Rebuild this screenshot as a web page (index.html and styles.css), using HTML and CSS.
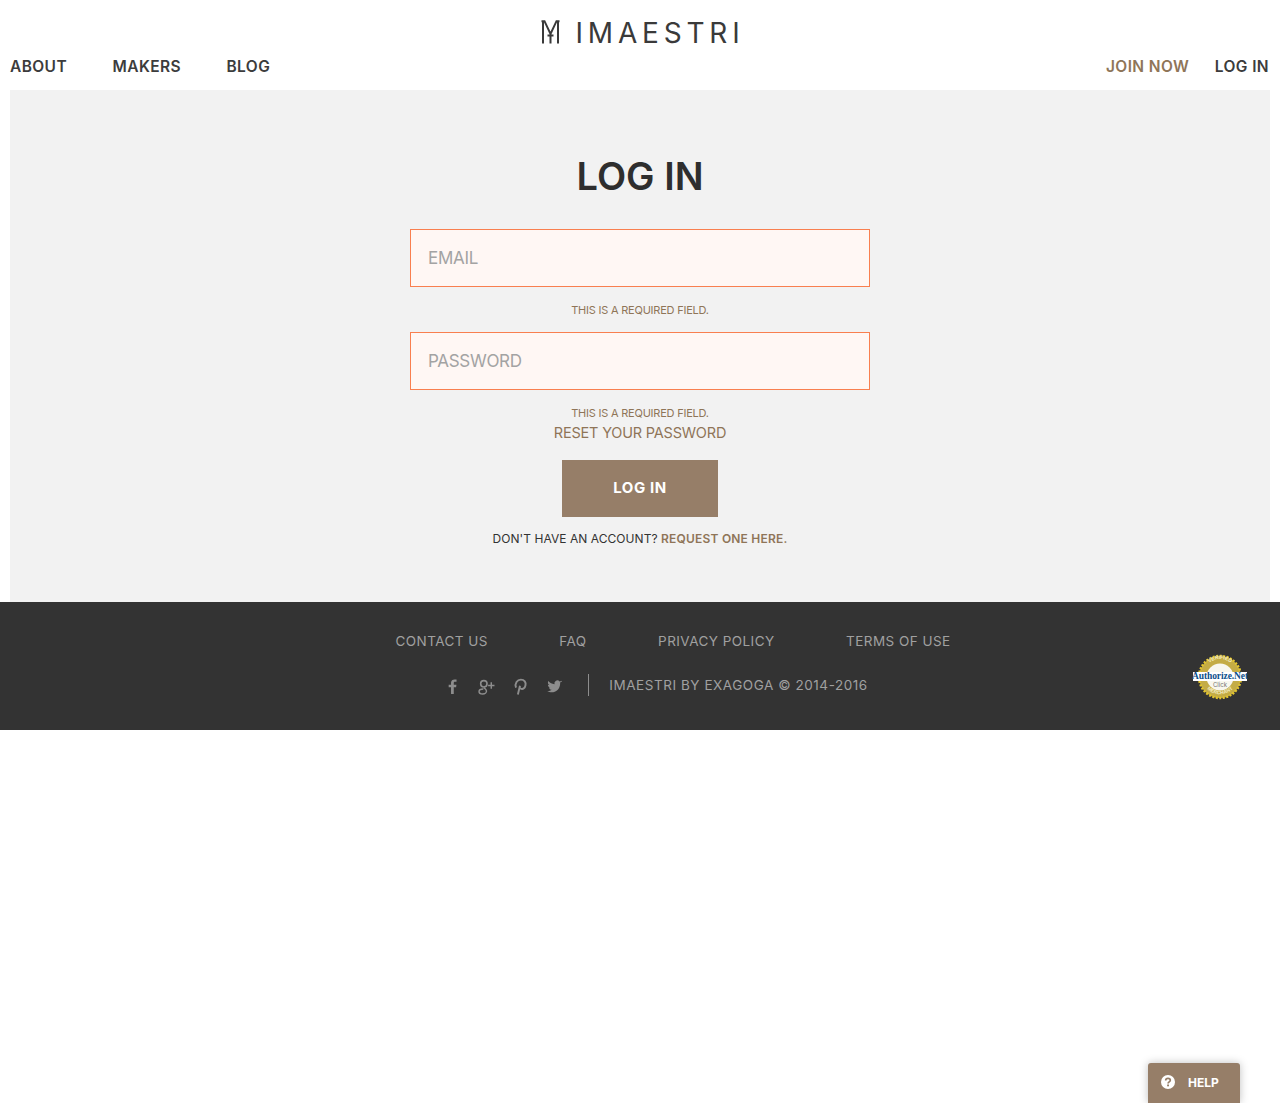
FILE: index.html
```
<!DOCTYPE html>
<html lang="en">
<head>
<meta charset="utf-8">
<title>iMaestri - Log in</title>
<link rel="stylesheet" href="styles.css">
</head>
<body>
<header class="site-header">
  <div class="logo">
    <svg class="logo-mark" viewBox="0 0 19 24" width="19" height="24"><path d="M2 23.500V1M17 23.500V1M.5 1.200h3L9.500 14l6-12.800h3M9.500 14v9.500M6.500 15.500h6" fill="none" stroke="#3a3a3a" stroke-width="2"/></svg>
    <span class="logo-text">IMAESTRI</span>
  </div>
  <nav class="nav">
    <div class="nav-left"><a>ABOUT</a><a>MAKERS</a><a>BLOG</a></div>
    <div class="nav-right"><a class="accent">JOIN NOW</a><a>LOG IN</a></div>
  </nav>
</header>
<main class="panel">
  <h1 class="title">LOG IN</h1>
  <div class="field">EMAIL</div>
  <p class="error">THIS IS A REQUIRED FIELD.</p>
  <div class="field">PASSWORD</div>
  <p class="error">THIS IS A REQUIRED FIELD.</p>
  <a class="reset">RESET YOUR PASSWORD</a>
  <button class="submit">LOG IN</button>
  <p class="signup">DON'T HAVE AN ACCOUNT? <a>REQUEST ONE HERE.</a></p>
</main>
<footer class="footer">
  <div class="footer-links"><a>CONTACT US</a><a>FAQ</a><a>PRIVACY POLICY</a><a>TERMS OF USE</a></div>
  <div class="footer-bottom">
    <div class="social">
      <svg viewBox="0 0 16 16" width="17" height="17"><path d="M9.200 15V8.700h2.200l.3-2.400H9.200V4.800c0-.7.200-1.200 1.200-1.200h1.400V1.500C11.400 1.500 10.700 1.400 9.900 1.400 8.100 1.400 6.600 2.500 6.600 4.500v1.800h-2.200v2.400h2.200V15z" fill="#8d8d8d"/></svg>
      <svg viewBox="0 0 16 16" width="17" height="17"><circle cx="5.500" cy="5.500" r="3" fill="none" stroke="#8d8d8d" stroke-width="1.500"/><path d="M5.500 9c2 1.500 2.500 2 2.500 3.200S6.700 15 4.500 15 1 14 1 12.600 3 10.300 5 10.300M12.500 4v6M9.500 7h6" fill="none" stroke="#8d8d8d" stroke-width="1.400"/></svg>
      <svg viewBox="0 0 16 16" width="17" height="17"><path d="M5.500 15.500c.6-2.400 1.400-5.500 2-8.200M3.800 9C2.300 5.200 5 1.500 8.300 1.500c3.500 0 5 2.600 4.400 5.300-.5 2.600-2.300 3.900-4 3.400-1-.3-1.400-1-1.400-1.500" fill="none" stroke="#8d8d8d" stroke-width="1.800"/></svg>
      <svg viewBox="0 0 16 16" width="17" height="17"><path d="M15 3.600c-.5.200-1 .4-1.600.5.600-.4 1-.9 1.200-1.600-.5.300-1.100.6-1.800.7a2.800 2.800 0 0 0-4.800 2.600C5.700 5.700 3.600 4.600 2.200 2.900c-.8 1.300-.4 3 .9 3.800-.5 0-.9-.1-1.300-.4 0 1.400 1 2.600 2.300 2.800-.4.100-.9.100-1.300 0 .4 1.100 1.400 1.900 2.600 2-1.200.9-2.700 1.400-4.200 1.200 4.300 2.700 12.200 1 12.200-8.100.6-.4 1.200-1 1.600-1.600z" fill="#8d8d8d"/></svg>
    </div>
    <span class="copyright">IMAESTRI BY EXAGOGA © 2014-2016</span>
  </div>
  <div class="seal" aria-label="Authorize.Net">
    <svg viewBox="0 0 56 46" width="56" height="46">
      <circle cx="28" cy="23" r="21" fill="#c4ac45" stroke="#e3c52e" stroke-width="2.500" stroke-dasharray="2 1.500"/>
      <circle cx="28" cy="23" r="13.500" fill="#f8f7ee"/>
      <rect x="1" y="18" width="54" height="9" fill="#fff"/>
      <path id="seal-top" d="M11 22a17 17 0 0 1 34 0" fill="none"/>
      <path id="seal-bottom" d="M10 26a18.500 18.500 0 0 0 36 0" fill="none"/>
      <text class="seal-ring"><textPath href="#seal-top" startOffset="50%" text-anchor="middle">VERIFIED</textPath></text>
      <text class="seal-ring"><textPath href="#seal-bottom" startOffset="50%" text-anchor="middle">MERCHANT</textPath></text>
    </svg>
    <span class="seal-text">Authorize.Net</span>
    <span class="seal-click">Click</span>
  </div>
</footer>
<button class="help"><svg viewBox="0 0 14 14" width="14" height="14"><circle cx="7" cy="7" r="7" fill="#fff"/><path d="M4.700 5.400c0-1.400 1.100-2.100 2.300-2.100s2.300.7 2.300 2c0 1.600-2.200 1.500-2.200 3.100" fill="none" stroke="#967e68" stroke-width="1.700"/><rect x="6.100" y="9.500" width="1.900" height="1.800" fill="#967e68"/></svg><span>HELP</span></button>
</body>
</html>
```
FILE: styles.css
```
* { box-sizing: border-box; }
html, body { margin: 0; padding: 0; }
body { background: #fff; font-family: Inter, "Liberation Sans", sans-serif; color: #333; height: 1103px; overflow: hidden; position: relative; }
a { color: inherit; text-decoration: none; }
.site-header { height: 90px; padding: 0 10px; display: flex; flex-direction: column; }
.logo { display: flex; justify-content: center; align-items: center; gap: 16px; padding-top: 20px; height: 56px; }
.logo-mark { margin-top: -12px; }
.logo-text { font-weight: 400; font-size: 28px; letter-spacing: 4.800px; color: #3a3a3a; line-height: 28px; margin-top: -10px; margin-right: -5px; }
.nav { display: flex; justify-content: space-between; font-size: 15.500px; font-weight: 600; line-height: 22px; letter-spacing: .4px; color: #3c3c3c; }
.nav-left { display: flex; gap: 45.500px; }
.nav-right { display: flex; gap: 25.500px; margin-right: 1px; }
.accent { color: #8f7558; }
.panel { margin: 0 10px; height: 512px; background: #f2f2f2; display: flex; flex-direction: column; align-items: center; padding-top: 65px; }
.title { margin: 0 0 32px; font-size: 38px; line-height: 42px; font-weight: 600; color: #2e2e2e; }
.field { width: 460px; height: 58px; border: 1px solid #f97f4f; background: #fff7f4; padding-left: 17px; line-height: 57px; font-size: 17px; color: #a3a3a3; letter-spacing: -.3px; }
.error { margin: 16px 0 15px; font-size: 11px; line-height: 14px; color: #8f7558; letter-spacing: -.22px; }
.reset { margin-top: -12px; font-size: 14.500px; line-height: 20px; color: #8f7558; letter-spacing: -.2px; }
.submit { margin-top: 17px; width: 156px; height: 57px; padding: 0 0 2px; border: 0; background: #967e68; color: #fff; font: 700 15px Inter, sans-serif; letter-spacing: .6px; }
.signup { margin: 14px 0 0; font-size: 12px; line-height: 16px; letter-spacing: .05px; color: #333; }
.signup a { color: #8f7558; font-weight: 600; letter-spacing: .2px; }
.footer { height: 128px; background: #333; color: #a0a0a0; position: relative; font-size: 13.500px; display: flex; flex-direction: column; align-items: center; padding-top: 29px; }
.footer-links { display: flex; gap: 71.500px; line-height: 20px; letter-spacing: .45px; margin-left: 66px; }
.footer-bottom { display: flex; align-items: center; margin-top: 23px; margin-left: 32px; }
.social { display: flex; gap: 17px; padding-right: 25px; border-right: 1px solid #8d8d8d; height: 22px; align-items: center; }
.social svg { margin-top: 2px; }
.copyright { padding-left: 20px; letter-spacing: .55px; }
.seal { position: absolute; left: 1192px; top: 52px; width: 56px; height: 46px; }
.seal-ring { font: 700 5px "Liberation Sans", sans-serif; fill: #f3ecc4; }
.seal-text { position: absolute; left: -3px; right: -3px; top: 17px; text-align: center; white-space: nowrap; font: 700 9.500px "Liberation Serif", serif; letter-spacing: -.1px; color: #0b4f8a; }
.seal-click { position: absolute; left: 0; right: 0; top: 27px; text-align: center; font-size: 6px; color: #777; }
.help { position: absolute; left: 1148px; top: 1063px; width: 92px; height: 40px; border: 0; border-radius: 3px 3px 0 0; background: #967e68; color: #fff; font: 700 12px Inter, sans-serif; display: flex; align-items: center; gap: 13px; padding: 0 0 2px 13px; box-shadow: 0 0 8px rgba(0,0,0,.25); }
```
